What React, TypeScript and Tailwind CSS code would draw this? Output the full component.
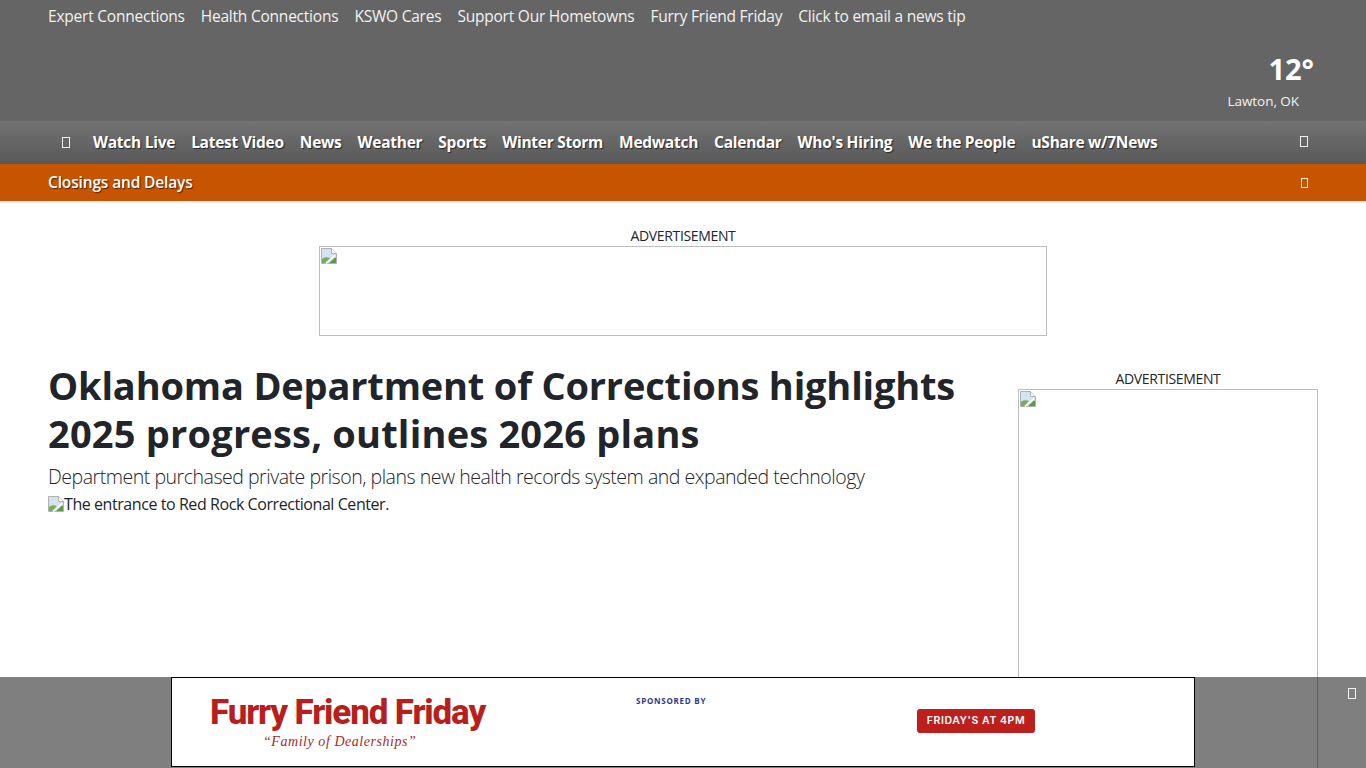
const font = { fontFamily: '"Open Sans", "Noto Sans", sans-serif' };

function Tofu({ className = "" }: { className?: string }) {
  return <span className={"block border border-white/90 " + className} />;
}

function Broken() {
  return (
    <svg width="16" height="16" viewBox="0 0 16 16" className="block shrink-0">
      <path d="M0.5 0.5H10.5L15.5 5.5V15.5H0.5Z" fill="#d5e2f2" stroke="#b0b0b0" />
      <path d="M10.5 0.5V5.5H15.5" fill="#fff" stroke="#b0b0b0" />
      <path d="M1 15V11C3 9 6 8.500 9 10L4.500 15Z" fill="#78ad5c" />
      <path d="M8 15L14 9.500L15 10V15Z" fill="#5c9a45" />
      <path d="M5 15.500L14 7.500" stroke="#fff" strokeWidth="1.5" />
    </svg>
  );
}

const top = ["Expert Connections", "Health Connections", "KSWO Cares", "Support Our Hometowns", "Furry Friend Friday", "Click to email a news tip"];
const nav = ["Watch Live", "Latest Video", "News", "Weather", "Sports", "Winter Storm", "Medwatch", "Calendar", "Who's Hiring", "We the People", "uShare w/7News"];

export default function App() {
  return (
    <div style={font} className="h-[768px] overflow-hidden bg-white text-[#212529]">
      <header className="relative shadow-[0_1px_2px_rgba(199,84,0,0.18)]">
        <div className="h-[121px] bg-[#656565] px-12 relative">
          <nav className="flex gap-[16px] pt-[6px] text-[15.5px] leading-[21px] text-[#f2f2f2] tracking-[-0.22px]">
            {top.map((t) => <a key={t}>{t}</a>)}
          </nav>
          <div className="absolute right-[52px] top-[52px] text-[29px] leading-[34px] font-bold text-white">12°</div>
          <div className="absolute right-[67px] top-[92px] text-[13.5px] leading-[18px] text-[#f2f2f2] tracking-[-0.05px]">Lawton, OK</div>
        </div>
        <div className="h-[43px] bg-gradient-to-b from-[#727272] to-[#595959] flex items-center pl-[62px] pr-[58px]">
          <Tofu className="w-[8px] h-[11px] mr-[23px]" />
          <nav className="flex gap-[16px] text-[15.5px] font-bold text-white tracking-[-0.26px] [text-shadow:1px_1px_1px_rgba(0,0,0,0.6)]">
            {nav.map((t) => <a key={t}>{t}</a>)}
          </nav>
          <Tofu className="w-[8px] h-[11px] ml-auto -translate-y-[1px]" />
        </div>
        <div className="h-[37px] bg-[#c75400] flex items-center pl-12 pr-[58px] justify-between">
          <span className="text-[15.5px] font-semibold text-white tracking-[-0.15px] [text-shadow:1px_1px_1px_rgba(0,0,0,0.6)]">Closings and Delays</span>
          <Tofu className="w-[7px] h-[10px]" />
        </div>
      </header>

      <div className="flex flex-col items-center pt-[24px]">
        <div className="text-[14px] leading-[21px] tracking-[-0.35px]">ADVERTISEMENT</div>
        <div className="w-[728px] h-[90px] border border-[#bdbdbd] p-[1px]"><Broken /></div>
      </div>

      <main className="flex px-12 pt-[25px] justify-between">
        <div className="w-[940px]">
          <h1 className="text-[38px] leading-[48px] font-bold tracking-[-0.18px]">
            Oklahoma Department of Corrections highlights <span className="tracking-[0.2px]">2025 progress, outlines 2026 plans</span>
          </h1>
          <p className="text-[19.5px] leading-[26px] font-light mt-[7px] tracking-[-0.47px]">Department purchased private prison, plans new health records system and expanded technology</p>
          <div className="flex text-[16px] leading-[16px] mt-[6px] tracking-[-0.43px]"><Broken /><span>The entrance to Red Rock Correctional Center.</span></div>
        </div>
        <div className="w-[300px] mt-[7px]">
          <div className="text-[14px] leading-[21px] text-center tracking-[-0.35px]">ADVERTISEMENT</div>
          <div className="h-[600px] border border-[#bdbdbd] p-[1px]"><Broken /></div>
        </div>
      </main>

      <div className="fixed left-0 right-0 bottom-0 h-[91px] bg-[#7f7f7f] flex justify-center">
        <div className="w-[1024px] h-[90px] bg-white border border-black relative shrink-0">
          <div className="absolute left-[38px] top-[15px] text-[35px] leading-[40px] font-extrabold text-[#b81f1c] tracking-[-1.15px]" style={{ fontFamily: "Roboto, sans-serif" }}>Furry Friend Friday</div>
          <div className="absolute left-[91px] top-[55px] text-[14px] leading-[18px] italic text-[#a52a2a] tracking-[0.55px]" style={{ fontFamily: '"Liberation Serif", serif' }}>“Family of Dealerships”</div>
          <div className="absolute left-[464px] top-[18px] text-[8px] leading-[10px] font-bold text-[#2b3990] tracking-[0.75px]">SPONSORED BY</div>
          <div className="absolute left-[745px] top-[31px] w-[118px] h-[24px] rounded-[3px] bg-[#bd1f1c] flex items-center justify-center text-[10.5px] font-semibold text-white tracking-[0.55px]" style={{ fontFamily: "Inter, sans-serif" }}>FRIDAY'S AT 4PM</div>
        </div>
        <div className="absolute right-[48px] top-0 bottom-0 w-px bg-[#5f5f5f]" />
        <span className="absolute right-[10px] top-[11px] block w-[8px] h-[11px] border border-white/90" />
      </div>
    </div>
  );
}
